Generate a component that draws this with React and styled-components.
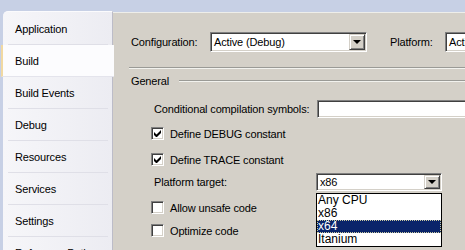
import React from 'react';
import styled, { createGlobalStyle } from 'styled-components';

const tabs = [
  'Application',
  'Build',
  'Build Events',
  'Debug',
  'Resources',
  'Services',
  'Settings',
  'Reference Paths',
];

const platforms = ['Any CPU', 'x86', 'x64', 'Itanium'];

export default function App() {
  return (
    <>
      <GlobalStyle />
      <Frame>
        <Sidebar>
          {tabs.map((tab) => (
            <Tab key={tab} $active={tab === 'Build'}>
              {tab}
            </Tab>
          ))}
        </Sidebar>
        <Content>
          <Row>
            <Label $width={79}>Configuration:</Label>
            <Select $width={157} $height={20} value="Active (Debug)" />
            <Label $width={55} $gap={23}>
              Platform:
            </Label>
            <Select $width={157} $height={20} value="Active (Any CPU)" />
          </Row>
          <Separator />
          <GroupRow>
            <span>General</span>
            <GroupLine />
          </GroupRow>
          <Indent>
            <Row $top={12}>
              <Label $width={166} $pad={3}>
                Conditional compilation symbols:
              </Label>
              <TextBox />
            </Row>
            <Check $top={9} checked label="Define DEBUG constant" />
            <Check $top={13} checked label="Define TRACE constant" />
            <Row $top={7}>
              <Label $width={165} $pad={3}>
                Platform target:
              </Label>
              <DropWrap>
                <Select $width={126} $height={18} value="x86" />
                <DropList>
                  {platforms.map((p) => (
                    <DropItem key={p} $selected={p === 'x64'}>
                      {p}
                    </DropItem>
                  ))}
                </DropList>
              </DropWrap>
            </Row>
            <Check $top={10} label="Allow unsafe code" />
            <Check $top={10} label="Optimize code" />
          </Indent>
        </Content>
      </Frame>
    </>
  );
}

function Select({ value, ...props }) {
  return (
    <SelectBox {...props}>
      <SelectText>{value}</SelectText>
      <DropButton>
        <Arrow />
      </DropButton>
    </SelectBox>
  );
}

function Check({ checked, label, ...props }) {
  return (
    <CheckRow {...props}>
      <CheckBox>
        {checked && (
          <svg width="7" height="7" viewBox="0 0 7 7">
            <path d="M0 2v3l2 2h1l4-4V0L2.5 4.5z" fill="#000" />
          </svg>
        )}
      </CheckBox>
      <span>{label}</span>
    </CheckRow>
  );
}

const GlobalStyle = createGlobalStyle`
  body {
    margin: 0;
    font-family: "Liberation Sans", Arial, sans-serif;
    font-size: 11px;
    letter-spacing: -0.15px;
    color: #000;
  }
`;

const Frame = styled.div`
  width: 465px;
  height: 250px;
  overflow: hidden;
  display: flex;
  box-sizing: border-box;
  padding-top: 11px;
  background: #c7d0e5;
`;

const Sidebar = styled.nav`
  width: 110px;
  flex-shrink: 0;
  margin-left: 3px;
  display: flex;
  flex-direction: column;
  box-sizing: border-box;
  padding-top: 1px;
  border-top: 1px solid #fbfbfd;
  border-right: 1px solid #bcbcc8;
  border-top-left-radius: 5px;
  background: linear-gradient(to right, #f6f6f9, #ececf2);
`;

const Tab = styled.div`
  flex-shrink: 0;
  height: 32px;
  box-sizing: border-box;
  display: flex;
  align-items: center;
  white-space: nowrap;
  margin: ${({ $active }) => ($active ? '0 -2px 0 -2px' : '0 4px 0 5px')};
  padding-left: ${({ $active }) => ($active ? '12px' : '7px')};
  border-left: ${({ $active }) => ($active ? '2px solid #f1d9a2' : 'none')};
  border-bottom: 1px solid ${({ $active }) => ($active ? '#e4e4ec' : '#dfdfe7')};
  background: ${({ $active }) => ($active ? '#fcfcfe' : 'transparent')};
  position: relative;
  z-index: ${({ $active }) => ($active ? 1 : 0)};
`;

const Content = styled.main`
  flex: 1;
  min-width: 0;
  margin-top: 1px;
  border-top: 1px solid #eeeeea;
  background: #d4d0c8;
  box-sizing: border-box;
  padding: 19px 0 0 18px;
  display: flex;
  flex-direction: column;
`;

const Row = styled.div`
  display: flex;
  align-items: center;
  flex-shrink: 0;
  margin-top: ${({ $top }) => $top || 0}px;
`;

const Label = styled.span`
  flex-shrink: 0;
  width: ${({ $width }) => $width}px;
  margin-left: ${({ $gap }) => $gap || 0}px;
  padding-left: ${({ $pad }) => $pad || 0}px;
  box-sizing: border-box;
  white-space: nowrap;
`;

const SelectBox = styled.div`
  flex-shrink: 0;
  width: ${({ $width }) => $width}px;
  height: ${({ $height }) => $height}px;
  box-sizing: border-box;
  display: flex;
  align-items: center;
  background: #fff;
  border: 1px solid;
  border-color: #808080 #fff #fff #808080;
  box-shadow: inset 1px 1px #404040, inset -1px -1px #d4d0c8;
  padding: 1px;
`;

const SelectText = styled.span`
  flex: 1;
  padding-left: 2px;
  white-space: nowrap;
  overflow: hidden;
`;

const DropButton = styled.div`
  width: 16px;
  height: 100%;
  box-sizing: border-box;
  display: flex;
  align-items: center;
  justify-content: center;
  background: #d4d0c8;
  border: 1px solid;
  border-color: #d4d0c8 #404040 #404040 #d4d0c8;
  box-shadow: inset 1px 1px #fff, inset -1px -1px #808080;
`;

const Arrow = styled.span`
  width: 0;
  height: 0;
  border-left: 4px solid transparent;
  border-right: 4px solid transparent;
  border-top: 4px solid #000;
`;

const Separator = styled.div`
  flex-shrink: 0;
  margin: 15px 0 0 -2px;
  height: 0;
  border-top: 1px solid #9a9a96;
  border-bottom: 1px solid #f2f2ee;
`;

const GroupRow = styled.div`
  flex-shrink: 0;
  display: flex;
  align-items: center;
  gap: 10px;
  height: 14px;
  margin-top: 5px;
`;

const GroupLine = styled.div`
  flex: 1;
  border-top: 1px solid #9a9a96;
  border-bottom: 1px solid #f2f2ee;
`;

const Indent = styled.div`
  display: flex;
  flex-direction: column;
  flex-shrink: 0;
  padding-left: 20px;
`;

const TextBox = styled.div`
  flex-shrink: 0;
  width: 160px;
  height: 18px;
  box-sizing: border-box;
  background: #fff;
  border: 1px solid;
  border-color: #808080 #fff #fff #808080;
  box-shadow: inset 1px 1px #404040, inset -1px -1px #d4d0c8;
`;

const CheckRow = styled.label`
  display: flex;
  align-items: center;
  gap: 6px;
  height: 13px;
  flex-shrink: 0;
  margin-top: ${({ $top }) => $top || 0}px;
`;

const CheckBox = styled.span`
  width: 13px;
  height: 13px;
  box-sizing: border-box;
  display: flex;
  align-items: center;
  justify-content: center;
  background: #fff;
  border: 1px solid;
  border-color: #808080 #fff #fff #808080;
  box-shadow: inset 1px 1px #404040, inset -1px -1px #d4d0c8;
`;

const DropWrap = styled.div`
  position: relative;
`;

const DropList = styled.ul`
  position: absolute;
  left: 0;
  top: 20px;
  width: 126px;
  margin: 0;
  padding: 0;
  list-style: none;
  box-sizing: border-box;
  background: #fff;
  border: 1px solid #000;
  z-index: 5;
`;

const DropItem = styled.li`
  height: 13px;
  line-height: 13px;
  padding-left: 1px;
  font-size: 12px;
  letter-spacing: 0;
  box-sizing: border-box;
  color: ${({ $selected }) => ($selected ? '#fff' : '#000')};
  background: ${({ $selected }) => ($selected ? '#0a246a' : 'transparent')};
  outline: ${({ $selected }) => ($selected ? '1px dotted #c8c8a0' : 'none')};
  outline-offset: -1px;
`;
